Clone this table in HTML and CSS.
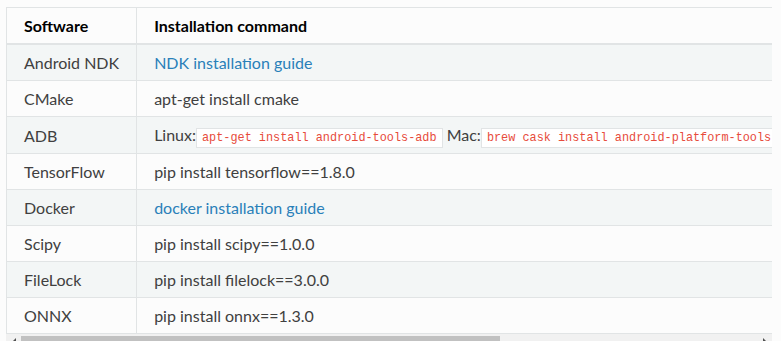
FILE: index.html
```html
<!DOCTYPE html>
<html lang="en">
<head>
    <meta charset="UTF-8">
    <meta name="viewport" content="width=device-width, initial-scale=1.0">
    <title>Requirements</title>
    <link rel="stylesheet" href="styles.css">
</head>
<body>
    <div class="table-responsive">
        <div class="table-viewport">
            <table class="docutils">
                <thead>
                    <tr>
                        <th>Software</th>
                        <th>Installation command</th>
                    </tr>
                </thead>
                <tbody>
                    <tr class="row-odd">
                        <td>Android NDK</td>
                        <td><a href="#">NDK installation guide</a></td>
                    </tr>
                    <tr>
                        <td>CMake</td>
                        <td>apt-get install cmake</td>
                    </tr>
                    <tr class="row-odd">
                        <td>ADB</td>
                        <td>Linux:<code>apt-get install android-tools-adb</code> Mac:<code>brew cask install android-platform-tools</code></td>
                    </tr>
                    <tr>
                        <td>TensorFlow</td>
                        <td>pip install tensorflow==1.8.0</td>
                    </tr>
                    <tr class="row-odd">
                        <td>Docker</td>
                        <td><a href="#">docker installation guide</a></td>
                    </tr>
                    <tr>
                        <td>Scipy</td>
                        <td>pip install scipy==1.0.0</td>
                    </tr>
                    <tr class="row-odd">
                        <td>FileLock</td>
                        <td>pip install filelock==3.0.0</td>
                    </tr>
                    <tr>
                        <td>ONNX</td>
                        <td>pip install onnx==1.3.0</td>
                    </tr>
                </tbody>
            </table>
        </div>

        <!-- horizontal scrollbar of the responsive wrapper -->
        <div class="scrollbar">
            <span class="scroll-btn scroll-left"></span>
            <span class="scroll-track"><span class="scroll-thumb"></span></span>
            <span class="scroll-btn scroll-right"></span>
        </div>
    </div>
</body>
</html>
```

FILE: styles.css
```css
html,
body {
    overflow: hidden;
}

body {
    margin: 7px 9px 0 6px;
    background: #fcfcfc;
    font-family: Lato, "Helvetica Neue", Arial, sans-serif;
    font-size: 16px;
    color: #404040;
}

.table-responsive {
    max-width: 100%;
}

.table-viewport {
    overflow: hidden;
}

table.docutils {
    border-collapse: collapse;
    border-spacing: 0;
    border: 1px solid #e1e4e5;
    width: 1177px;
}

table.docutils th,
table.docutils td {
    font-size: 16px;
    line-height: 19px;
    padding: 8px 17px;
    border: 1px solid #e1e4e5;
    white-space: nowrap;
    text-align: left;
    vertical-align: middle;
}

table.docutils th:first-child,
table.docutils td:first-child {
    width: 1px;
}

table.docutils td {
    border-top: none;
    border-bottom: 1px solid #e1e4e5;
}

table.docutils thead th {
    font-weight: bold;
    color: #000;
    border-bottom: 2px solid #e1e4e5;
}

table.docutils .row-odd td {
    background-color: #f3f6f6;
}

a {
    color: #2980b9;
    text-decoration: none;
}

code {
    font-family: "Liberation Mono", "Courier New", monospace;
    font-size: 11.85px;
    line-height: 14px;
    color: #e74c3c;
    background: #fff;
    border: 1px solid #e1e4e5;
    padding: 2px 5px;
    white-space: nowrap;
}

.scrollbar {
    display: flex;
    height: 15px;
    background: #f1f1f1;
}

.scroll-btn {
    width: 15px;
    flex: none;
    display: flex;
    align-items: center;
    justify-content: center;
}

.scroll-btn::before {
    content: "";
    width: 0;
    height: 0;
    border-top: 4px solid transparent;
    border-bottom: 4px solid transparent;
}

.scroll-left::before {
    border-right: 4px solid #505050;
}

.scroll-right::before {
    border-left: 4px solid #505050;
}

.scroll-track {
    flex: 1;
    padding: 2px 0;
}

.scroll-thumb {
    display: block;
    width: 479px;
    height: 100%;
    background: #c1c1c1;
}
```
